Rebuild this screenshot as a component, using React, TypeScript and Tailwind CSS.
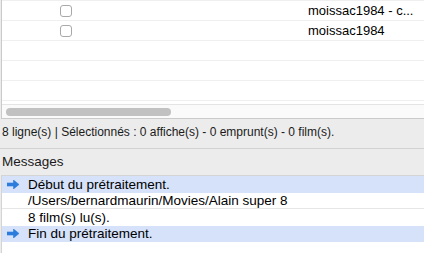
const rows = [
  { checked: false, title: 'moissac1984 - c...' },
  { checked: false, title: 'moissac1984' },
  null,
  null,
  null,
];

const messages = [
  { arrow: true, text: 'Début du prétraitement.', line: false },
  { arrow: false, text: '/Users/bernardmaurin/Movies/Alain super 8', line: true },
  { arrow: false, text: '8 film(s) lu(s).', line: false },
  { arrow: true, text: 'Fin du prétraitement.', line: false },
];

function BlueArrow() {
  return (
    <svg width="12" height="9" viewBox="0 0 12 9" className="shrink-0">
      <polygon points="0,3 6.5,3 6.5,0 12,4.5 6.5,9 6.5,6 0,6" fill="#2b7cdc" strokeLinejoin="round" stroke="#2b7cdc" strokeWidth="0.6" />
    </svg>
  );
}

export default function App() {
  return (
    <div className="h-[253px] w-[424px] overflow-hidden bg-[#ececec] font-['Liberation_Sans',Arial,sans-serif] text-[13px] text-black">
      {/* film table */}
      <div className="ml-px flex h-[119px] flex-col border-b border-l border-[#cacaca] bg-white">
        <div className="border-t border-[#efefef]">
          {rows.map((row, i) => (
            <div key={i} className="relative flex h-[20px] items-center border-b border-[#efefef]">
              {row && (
                <>
                  <span className="ml-[58px] h-[12px] w-[12px] rounded-[3px] border border-[#a9a9a9] bg-white" />
                  <span className="ml-[236px] leading-[15px]">{row.title}</span>
                </>
              )}
            </div>
          ))}
        </div>
        <div className="mt-[3px] flex flex-1 items-center border-t border-[#e4e4e4] bg-[#fafafa] pl-[4px]">
          <div className="h-[8px] w-[165px] rounded-full bg-[#c1c1c1]" />
        </div>
      </div>

      {/* status */}
      <div className="h-[29px] whitespace-nowrap pl-[2px] pt-[6px] text-[12px] leading-[15px] text-[#1a1a1a]">
        8 ligne(s) | Sélectionnés : 0 affiche(s) - 0 emprunt(s) - 0 film(s).
      </div>

      <div className="h-[27px] border-t border-[#d2d2d2] pl-[2px] pt-[5px] text-[13.5px] leading-[16px] text-[#1a1a1a]">Messages</div>

      {/* messages list */}
      <div className="ml-px h-[78px] border-l border-t border-[#d4d4d4] bg-white text-[13.5px]">
        {messages.map((m, i) => (
          <div
            key={i}
            className={`flex h-[16.5px] items-center whitespace-nowrap leading-[15px] ${m.arrow ? 'bg-[#d5e2f9] pl-[5px]' : 'pl-[26px]'} ${m.line ? 'border-b border-[#e6e6e6]' : ''}`}
          >
            {m.arrow && <BlueArrow />}
            <span className={m.arrow ? 'ml-[9px]' : ''}>{m.text}</span>
          </div>
        ))}
      </div>
    </div>
  );
}
